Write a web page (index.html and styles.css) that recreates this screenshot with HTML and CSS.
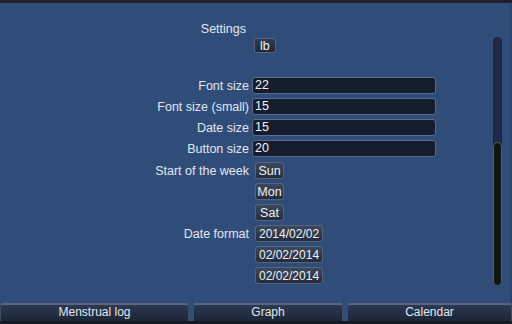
FILE: index.html
```html
<!DOCTYPE html>
<html>
<head>
<meta charset="utf-8">
<link rel="stylesheet" href="styles.css">
</head>
<body>
<div class="app">
  <div class="topbar"></div>
  <div class="main">
    <div class="content">
      <div class="row row-title"><div class="label">Settings</div><div class="ctrl"></div></div>
      <div class="row row-lb"><div class="label"></div><div class="ctrl"><span class="btn">lb</span></div></div>

      <div class="group inputs">
        <div class="row"><div class="label">Font size</div><div class="ctrl"><div class="input">22</div></div></div>
        <div class="row"><div class="label">Font size (small)</div><div class="ctrl"><div class="input">15</div></div></div>
        <div class="row"><div class="label">Date size</div><div class="ctrl"><div class="input">15</div></div></div>
        <div class="row"><div class="label">Button size</div><div class="ctrl"><div class="input">20</div></div></div>
      </div>

      <div class="group week">
        <div class="row"><div class="label">Start of the week</div><div class="ctrl"><span class="btn">Sun</span></div></div>
        <div class="row"><div class="label"></div><div class="ctrl"><span class="btn">Mon</span></div></div>
        <div class="row"><div class="label"></div><div class="ctrl"><span class="btn">Sat</span></div></div>
      </div>

      <div class="group dates">
        <div class="row"><div class="label">Date format</div><div class="ctrl"><span class="btn">2014/02/02</span></div></div>
        <div class="row"><div class="label"></div><div class="ctrl"><span class="btn">02/02/2014</span></div></div>
        <div class="row"><div class="label"></div><div class="ctrl"><span class="btn">02/02/2014</span></div></div>
      </div>
    </div>
    <div class="scrollbar"><div class="thumb"></div></div>
  </div>
  <div class="nav">
    <div class="tab">Menstrual log</div>
    <div class="tab">Graph</div>
    <div class="tab">Calendar</div>
  </div>
  <div class="bottombar"></div>
</div>
</body>
</html>
```

FILE: styles.css
```css
html, body {
  margin: 0;
  padding: 0;
}
body {
  width: 512px;
  height: 324px;
  overflow: hidden;
  background: #304d7a;
  font-family: "Liberation Sans", Arial, sans-serif;
  font-size: 12.5px;
  color: #e3e7ee;
}
.app {
  display: flex;
  flex-direction: column;
  height: 324px;
}
.topbar {
  height: 3px;
  background: #1c222c;
}
.main {
  height: 300px;
  display: flex;
  border-right: 2px solid #2a4470;
}
.content {
  flex: 1;
  display: flex;
  flex-direction: column;
  padding-top: 18px;
}
.row {
  display: flex;
  align-items: center;
}
.label {
  width: 252px;
  padding-right: 3px;
  box-sizing: border-box;
  flex: none;
  text-align: right;
  white-space: nowrap;
  line-height: 14px;
}
.ctrl {
  display: flex;
}
.row-title {
  height: 16px;
}
.row-title .label {
  padding-right: 6px;
}
.row-lb {
  margin-top: 1px;
}
.row-lb .ctrl {
  padding-left: 2px;
}
.btn {
  display: inline-block;
  height: 16px;
  line-height: 15px;
  padding: 0 3px;
  box-sizing: border-box;
  border: 1px solid #56647c;
  border-radius: 3px;
  background: linear-gradient(#3c485e, #232c3d);
  color: #eef1f5;
  font-size: 12.5px;
}
.row-lb .btn {
  height: 15px;
  line-height: 14px;
  padding: 0 5px;
  background: linear-gradient(#2e3a50, #1f2838);
}
.group {
  display: flex;
  flex-direction: column;
  gap: 4px;
}
.inputs {
  margin-top: 24px;
}
.input {
  width: 184px;
  height: 17px;
  box-sizing: border-box;
  border: 1px solid #5a6c8a;
  border-radius: 3px;
  background: #151d2e;
  color: #f2f4f8;
  line-height: 15px;
  padding-left: 2px;
}
.week {
  margin-top: 5px;
}
.week .ctrl, .dates .ctrl {
  padding-left: 3px;
}
.week .btn {
  width: 29px;
  text-align: center;
  padding: 0;
  height: 17px;
  line-height: 16px;
}
.dates {
  margin-top: 4px;
}
.dates .btn {
  height: 17px;
  line-height: 16px;
  padding: 0 3px;
  font-size: 12px;
}
.scrollbar {
  width: 9px;
  height: 249px;
  margin-top: 34px;
  margin-right: 8px;
  box-sizing: border-box;
  border-radius: 5px;
  background: #1d2a48;
  border: 1px solid #1a2640;
  display: flex;
  flex-direction: column;
  justify-content: flex-end;
}
.thumb {
  height: 144px;
  margin: 0 -1px -1px -1px;
  box-sizing: border-box;
  border-radius: 5px;
  background: #121212;
  border: 1px solid #5c5c5c;
}
.nav {
  height: 18px;
  display: grid;
  grid-template-columns: 189px 150px 1fr;
  gap: 4px;
  font-size: 12px;
}
.tab {
  box-sizing: border-box;
  border-top: 2px solid #58677f;
  border-left: 1px solid #3e4c64;
  border-right: 1px solid #3e4c64;
  border-radius: 3px 3px 0 0;
  background: linear-gradient(#2b3850, #1d2638);
  text-align: center;
  line-height: 15px;
  color: #e3e7ee;
}
.bottombar {
  height: 3px;
  background: #161b24;
}
```
